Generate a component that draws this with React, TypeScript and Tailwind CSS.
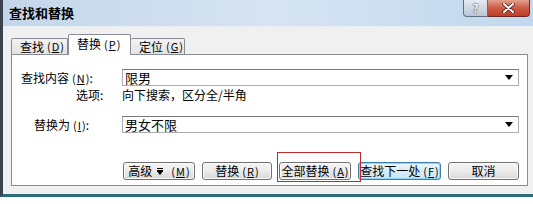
import React from 'react';

const font = { fontFamily: '"Noto Sans CJK SC", "Liberation Sans", sans-serif' };

const Key = ({ k }: { k: string }) => (
  <span className="ml-[3px] text-[11px]">
    (<span className="underline px-[1px]">{k}</span>)
  </span>
);

const Arrow = () => (
  <svg width="8" height="5" viewBox="0 0 8 5" className="mr-[5px]">
    <path d="M0 0h8L4 5z" fill="#000" />
  </svg>
);

const Button: React.FC<{ w: string; children: React.ReactNode; primary?: boolean }> = ({ w, children, primary }) => (
  <div
    className={`${w} h-[18px] flex items-center justify-center rounded-[3px] border text-[12px] leading-none text-black ${
      primary
        ? 'border-[#3c7fb1] bg-gradient-to-b from-[#eaf6fd] to-[#c4e5f6] shadow-[inset_0_0_0_1px_#8fd3f5]'
        : 'border-[#707070] bg-gradient-to-b from-[#f4f4f4] via-[#ececec] to-[#d6d6d6] shadow-[inset_0_0_0_1px_#fcfcfc]'
    }`}
  >
    {children}
  </div>
);

export default function App() {
  return (
    <div className="w-[533px] h-[204px] bg-white overflow-hidden" style={font}>
      <div className="h-[197px] flex flex-col border-l-[3px] border-l-[#3b444c] border-b-[3px] border-b-[#2c6b78]">
        {/* title bar */}
        <div className="h-[27px] shrink-0 flex items-start bg-gradient-to-r from-[#c4d6ea] via-[#d6e4f2] to-[#c2d8ee] border-b border-b-[#e9eff6]">
          <div className="pl-[6px] pt-[6px] text-[13px] font-bold text-black leading-none">查找和替换</div>
          <div className="ml-auto mr-[3px] flex">
            <div className="w-[25px] h-[17px] flex items-center justify-center rounded-bl-[4px] border border-t-0 border-[#5f6f80] bg-gradient-to-b from-[#e4ebf2] to-[#b9c6d3] text-[12px] font-bold text-white leading-none [text-shadow:0_0_1px_#333,0_0_1px_#333]">
              ?
            </div>
            <div className="w-[42px] h-[17px] flex items-center justify-center rounded-br-[4px] border border-t-0 border-l-0 border-[#6b2b23] bg-gradient-to-b from-[#e3a08f] via-[#cc5a45] to-[#c23c28]">
              <svg width="13" height="10" viewBox="0 0 13 10">
                <path d="M2 1l9 8M11 1L2 9" stroke="#4a1a12" strokeWidth="3.5" strokeLinecap="round" />
                <path d="M2 1l9 8M11 1L2 9" stroke="#fff" strokeWidth="2" strokeLinecap="round" />
              </svg>
            </div>
          </div>
        </div>

        {/* body */}
        <div className="flex-1 bg-[#f0f0f0] pl-[8px] pr-[5px] pt-[7px]">
          {/* tabs */}
          <div className="flex items-end h-[20px] text-[12px] leading-none text-black">
            <div className="w-[57px] h-[16px] flex items-center pl-[8px] border border-b-0 border-[#898c95] bg-gradient-to-b from-[#f3f3f3] to-[#e3e3e3] rounded-t-[2px]">
              查找<Key k="D" />
            </div>
            <div className="w-[63px] h-[21px] -mb-px relative z-10 flex items-center pl-[8px] pb-[2px] border border-b-0 border-[#898c95] bg-white rounded-t-[2px]">
              替换<Key k="P" />
            </div>
            <div className="w-[54px] h-[16px] flex items-center pl-[8px] border border-b-0 border-l-0 border-[#898c95] bg-gradient-to-b from-[#f3f3f3] to-[#e3e3e3] rounded-t-[2px]">
              定位<Key k="G" />
            </div>
          </div>

          {/* panel */}
          <div className="w-[517px] h-[132px] bg-white border border-[#898c95] pr-[8px] pt-[14px] text-[12px] text-black">
            <div className="flex items-center h-[17px]">
              <div className="w-[110px] pl-[9px] leading-none">
                查找内容<Key k="N" />:
              </div>
              <div className="flex-1 h-[17px] flex items-center border border-[#abadb3] border-t-[#7a7a7a] bg-white">
                <span className="pl-[2px] text-[13px] leading-[15px]">限男</span>
                <span className="ml-auto flex">
                  <Arrow />
                </span>
              </div>
            </div>
            <div className="flex items-center h-[13px] mt-[2px] leading-[13px]">
              <div className="w-[110px] pl-[64px]">选项:</div>
              <div>向下搜索，区分全/半角</div>
            </div>
            <div className="flex items-center h-[17px] mt-[15px]">
              <div className="w-[110px] pl-[22px] leading-none">
                替换为<Key k="I" />:
              </div>
              <div className="flex-1 h-[17px] flex items-center border border-[#abadb3] border-t-[#7a7a7a] bg-white">
                <span className="pl-[2px] text-[13px] leading-[15px]">男女不限</span>
                <span className="ml-auto flex">
                  <Arrow />
                </span>
              </div>
            </div>

            {/* buttons */}
            <div className="flex justify-end mt-[29px] gap-[7px]">
              <Button w="w-[72px]">
                高级
                <svg width="6" height="7" viewBox="0 0 6 7" className="mx-[5px]">
                  <path d="M0 0.5h6M0 2.5h6L3 6.5z" stroke="#000" strokeWidth="1" fill="#000" />
                </svg>
                <Key k="M" />
              </Button>
              <Button w="w-[70px]">
                替换<Key k="R" />
              </Button>
              <div className="relative">
                <Button w="w-[72px]">
                  全部替换<Key k="A" />
                </Button>
                <div className="absolute left-[-2px] top-[-10px] w-[84px] h-[30px] border border-[#c0282d] pointer-events-none" />
              </div>
              <Button w="w-[83px]" primary>
                查找下一处<Key k="F" />
              </Button>
              <Button w="w-[71px]">取消</Button>
            </div>
          </div>
        </div>
      </div>
    </div>
  );
}
